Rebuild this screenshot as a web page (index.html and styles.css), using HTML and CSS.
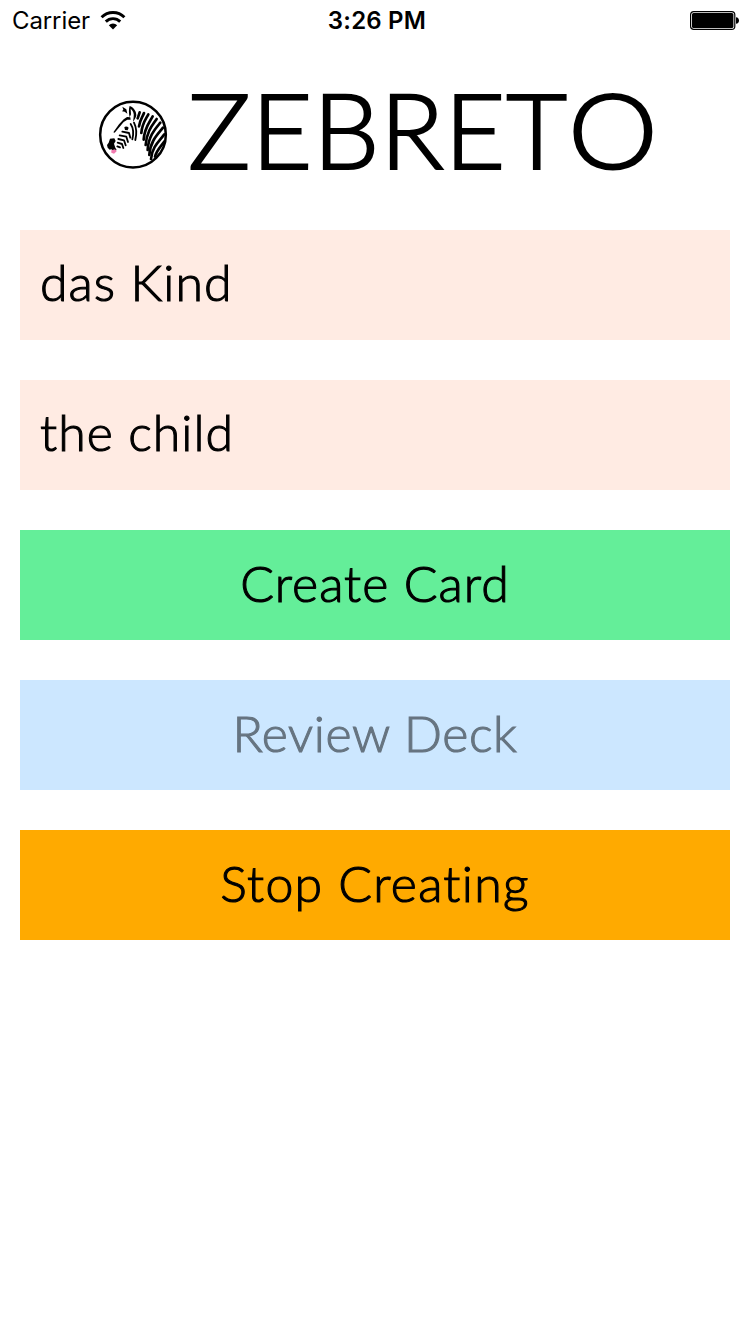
FILE: index.html
```html
<!DOCTYPE html>
<html lang="en">
<head>
<meta charset="utf-8">
<title>Zebreto</title>
<link rel="stylesheet" href="styles.css">
</head>
<body>
<div class="status">
  <div class="status-left">
    <span class="carrier">Carrier</span>
    <svg class="wifi" viewBox="0 0 26 20" width="26" height="20">
      <g fill="none" stroke="#000" stroke-width="2.9">
        <path d="M1.6 7.3A16 16 0 0 1 24.4 7.3"/>
        <path d="M5.8 11.6A10.2 10.2 0 0 1 20.2 11.6"/>
      </g>
      <path d="M13 19.6L8.8 15.3A6 6 0 0 1 17.2 15.3Z"/>
    </svg>
  </div>
  <span class="time">3:26 PM</span>
  <div class="status-right">
    <svg class="battery" viewBox="0 0 50 20" width="50" height="20">
      <rect x=".6" y=".6" width="44.2" height="17.8" rx="3.2" fill="#fff" stroke="#000" stroke-width="1.2"/>
      <rect x="2" y="2" width="41.4" height="15" rx="1.5"/>
      <path d="M46 6.2c4 .3 4 6.3 0 6.6z"/>
    </svg>
  </div>
</div>
<header class="header">
  <!-- zebra head in a ring -->
  <svg class="logo" viewBox="0 0 252 246" width="84" height="82">
    <circle cx="129" cy="122" r="98.5" fill="#fff" stroke="#000" stroke-width="7.5"/>
    <path d="M97 38l12 8 3 13-8-6-8-1 4-5z"/>
    <path d="M119 36c11 4 20 14 20 28-2 8-5 14-10 19l2-14c2-12-3-20-9-25l1 17-4 9c-3-12-3-26 0-35z"/>
    <path d="M111 69l10 1 1 7-10 0-11 7-27 32-4-1 17-24 14-15z"/>
    <path d="M103 100c3-4 9-3 13 1l-3 8-8-1z"/>
    <path d="M60 134l13-1 4 8-5 8 4 12 4 7-8 4-8-6-5 1-6-6-2-8 5-7z"/>
    <path d="M64 169l11-3 5 6-8 7-8-3z" fill="#f27bb0"/>
    <g fill="none" stroke="#000" stroke-linecap="round" stroke-linejoin="round" stroke-width="5.5">
      <path d="M97 113l20 4 4 14M89 124l20 4 5 16M85 135l17 4 5 15M83 146l13 4 4 12M82 157l8 3"/>
      <path d="M122 90c8 12 10 26 5 46M132 86c7 14 9 31 4 52"/>
    </g>
    <g fill="none" stroke="#000" stroke-linecap="round" stroke-width="8">
      <path d="M149 55l-6 18"/>
      <path d="M162 57c-4 12-12 20-15 40"/>
      <path d="M175 61c-8 15-19 28-21 56"/>
      <path d="M188 67c-9 17-25 35-27 70"/>
      <path d="M200 75c-11 16-30 36-33 78"/>
      <path d="M211 86c-14 17-36 40-38 82"/>
      <path d="M219 101c-14 18-39 40-41 82"/>
      <path d="M223 121c-12 18-37 36-40 74"/>
      <path d="M223 142c-8 13-22 24-28 46"/>
    </g>
  </svg>
  <h1 class="title">ZEBRET<span class="round">O</span></h1>
</header>
<main class="form">
  <div class="field"><span class="label t-kind">das Kind</span></div>
  <div class="field"><span class="label t-child">the child</span></div>
  <div class="button create"><span class="label t-create">Create Card</span></div>
  <div class="button review"><span class="label t-review">Review Deck</span></div>
  <div class="button stop"><span class="label t-stop">Stop Creating</span></div>
</main>
</body>
</html>
```
FILE: styles.css
```css
body {
  margin: 0;
  min-height: 1334px;
  background: #fff;
  color: #000;
  font-family: Lato, "Open Sans", sans-serif;
  font-variant-ligatures: none;
}
.status {
  display: grid;
  grid-template-columns: 1fr auto 1fr;
  height: 40px;
  box-sizing: border-box;
  padding: 0 10px 0 12px;
  align-items: center;
  font-family: Inter, Roboto, sans-serif;
  font-size: 24px;
  line-height: 38px;
}
.status-left { display: flex; align-items: center; gap: 10px; }
.wifi { margin-bottom: 1px; }
.carrier { letter-spacing: -0.1px; padding-top: 2px; }
.time { font-weight: 600; letter-spacing: 0.2px; padding: 2px 0 0 2px; }
.status-right { display: flex; justify-content: flex-end; }
.battery { margin-top: 2px; }
.header {
  display: flex;
  height: 190px;
  padding-left: 90px;
}
.logo { margin-top: 54px; flex: none; }
.title {
  margin: 24px 0 0 14px;
  font-size: 105px;
  font-weight: 300;
  line-height: 128px;
  letter-spacing: 0.7px;
  -webkit-text-stroke: 2.2px #000;
}
.round {
  display: inline-block;
  transform: scaleX(1.08);
  transform-origin: left;
}
.form {
  display: flex;
  flex-direction: column;
  gap: 40px;
  padding: 0 20px;
}
.field, .button {
  display: flex;
  align-items: center;
  height: 110px;
  font-size: 50px;
  font-weight: 300;
  line-height: 60px;
  -webkit-text-stroke: 1.1px currentColor;
}
.field { padding-left: 20px; box-sizing: border-box; background: #ffebe3; }
.button { justify-content: center; }
.create { background: #64ee99; }
.review { background: #cce7ff; color: #667480; }
.stop { background: #ffaa00; }
.label { white-space: nowrap; padding-bottom: 5px; letter-spacing: 1px; }
.field .label { padding-bottom: 7px; }
.t-review { letter-spacing: 0.6px; }
.t-stop { letter-spacing: 1.3px; }
```
